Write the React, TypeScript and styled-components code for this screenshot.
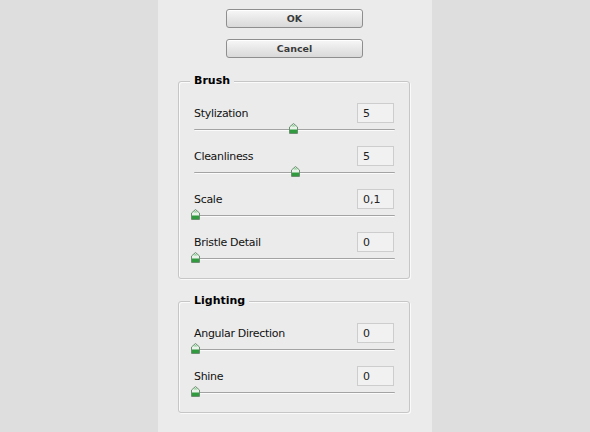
import styled, { createGlobalStyle } from "styled-components";

interface SliderSetting {
  label: string;
  value: string;
  pos: number;
}

const brush: SliderSetting[] = [
  { label: "Stylization", value: "5", pos: 49 },
  { label: "Cleanliness", value: "5", pos: 49.6 },
  { label: "Scale", value: "0,1", pos: 0 },
  { label: "Bristle Detail", value: "0", pos: 0 },
];

const lighting: SliderSetting[] = [
  { label: "Angular Direction", value: "0", pos: 0 },
  { label: "Shine", value: "0", pos: 0 },
];

function Thumb() {
  return (
    <svg width="9" height="11" viewBox="0 0 9 11">
      <path d="M4.5 0.5 L8.5 4 L8.5 10.5 L0.5 10.5 L0.5 4 Z" fill="#e9f3ea" stroke="#6c8f72" />
      <rect x="1" y="6.5" width="7" height="3.5" fill="#2f9a3e" />
      <path d="M4.5 1.5 L6.5 3.5 L2.5 3.5 Z" fill="#8fcf98" />
    </svg>
  );
}

function SettingRow({ item }: { item: SliderSetting }) {
  return (
    <Row>
      <RowHead>
        <Label>{item.label}</Label>
        <ValueBox>{item.value}</ValueBox>
      </RowHead>
      <Slider>
        <Track />
        <ThumbWrap style={{ left: `${item.pos}%` }}>
          <Thumb />
        </ThumbWrap>
      </Slider>
    </Row>
  );
}

function Group({ title, items }: { title: string; items: SliderSetting[] }) {
  return (
    <GroupBox>
      <GroupTitle>{title}</GroupTitle>
      {items.map((it) => (
        <SettingRow key={it.label} item={it} />
      ))}
    </GroupBox>
  );
}

export default function App() {
  return (
    <>
      <GlobalStyle />
      <Page>
        <Panel>
          <Buttons>
            <Button>OK</Button>
            <Button>Cancel</Button>
          </Buttons>
          <Group title="Brush" items={brush} />
          <Group title="Lighting" items={lighting} />
        </Panel>
      </Page>
    </>
  );
}

const GlobalStyle = createGlobalStyle`
  html, body {
    margin: 0;
    padding: 0;
    background: #dedede;
    font-family: "DejaVu Sans", "Liberation Sans", sans-serif;
  }
`;

const Page = styled.div`
  width: 590px;
  height: 432px;
  display: flex;
  justify-content: center;
  overflow: hidden;
`;

const Panel = styled.div`
  width: 274px;
  height: 432px;
  background: #ebebeb;
  box-sizing: border-box;
  padding: 9px 22px 0 20px;
  display: flex;
  flex-direction: column;
  gap: 22px;
`;

const Buttons = styled.div`
  display: flex;
  flex-direction: column;
  align-items: center;
  gap: 11px;
  margin-bottom: 1px;
  padding-left: 1px;
`;

const Button = styled.div`
  width: 137px;
  height: 19px;
  box-sizing: border-box;
  border: 1px solid #8e8e8e;
  border-radius: 3px;
  background: linear-gradient(#f7f7f7, #e6e6e6 55%, #d9d9d9);
  box-shadow: inset 0 1px 0 #ffffff;
  display: flex;
  align-items: center;
  justify-content: center;
  font-family: "DejaVu Sans", sans-serif;
  font-weight: bold;
  font-size: 9.5px;
  color: #3a3a3a;
`;

const GroupBox = styled.div`
  position: relative;
  border: 1px solid #c6c6c6;
  box-shadow: inset 1px 1px 0 #fafafa, 1px 1px 0 #fafafa;
  border-radius: 3px;
  padding: 21px 14px 14px 14px;
  display: flex;
  flex-direction: column;
  gap: 11px;
`;

const GroupTitle = styled.div`
  position: absolute;
  top: -8px;
  left: 11px;
  padding: 0 4px;
  background: #ebebeb;
  font-family: "DejaVu Sans", sans-serif;
  font-weight: bold;
  font-size: 11px;
  color: #000;
`;

const Row = styled.div`
  display: flex;
  flex-direction: column;
`;

const RowHead = styled.div`
  display: flex;
  align-items: center;
  justify-content: space-between;
  height: 20px;
  padding-left: 1px;
`;

const Label = styled.span`
  font-size: 11px;
  color: #111;
  font-family: "DejaVu Sans", sans-serif;
  letter-spacing: -0.3px;
`;

const ValueBox = styled.div`
  width: 37px;
  height: 20px;
  margin-right: 1px;
  box-sizing: border-box;
  border: 1px solid #cdcdcd;
  background: #f1f1f1;
  font-size: 11px;
  color: #222;
  padding-left: 5px;
  display: flex;
  align-items: center;
`;

const Slider = styled.div`
  position: relative;
  height: 12px;
  margin: 0 0 0 1px;
`;

const Track = styled.div`
  position: absolute;
  left: 0;
  right: 0;
  top: 6px;
  height: 1px;
  background: #a3a3a3;
  border-bottom: 1px solid #fbfbfb;
  border-radius: 1px;
`;

const ThumbWrap = styled.div`
  position: absolute;
  top: 0;
  margin-left: -3px;
  line-height: 0;
`;
